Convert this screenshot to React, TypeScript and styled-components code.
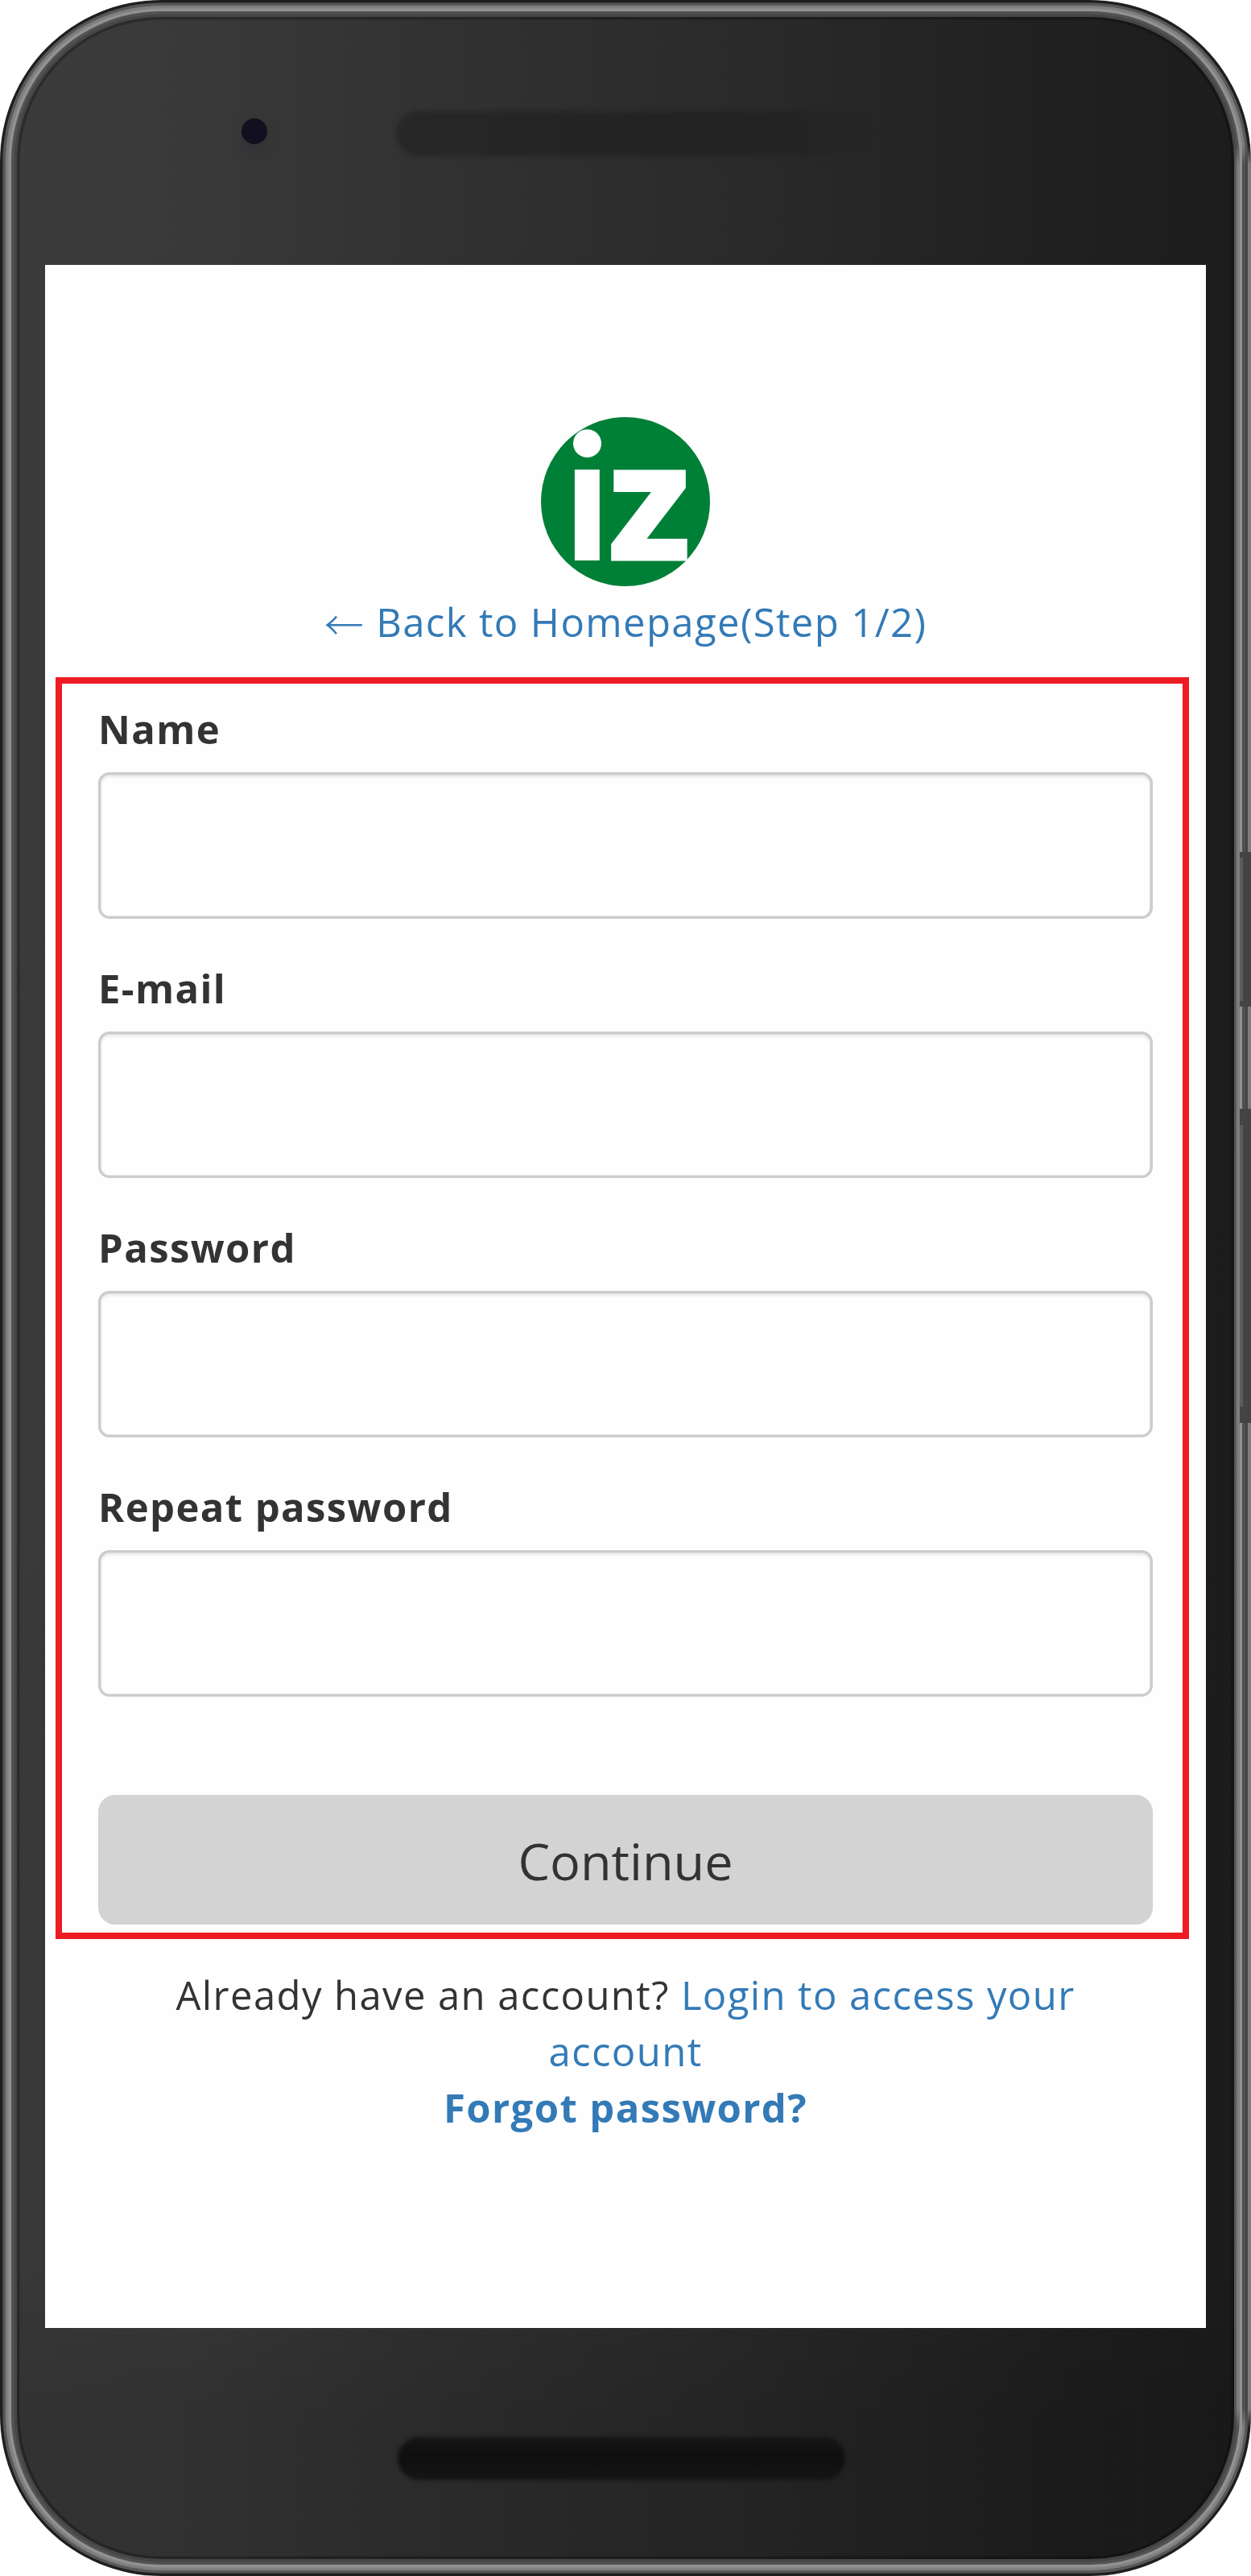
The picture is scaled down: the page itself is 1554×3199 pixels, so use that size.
import styled, { createGlobalStyle, css } from 'styled-components';

const GlobalStyle = createGlobalStyle`
    * {
        box-sizing: border-box;
    }

    body {
        margin: 0;
        background: #fff;
        color: #333;
        font-family: 'Open Sans', sans-serif;
        font-size: 49px;
        line-height: 70px;
        letter-spacing: 1.4px;
    }
`;

const Phone = styled.div`
    position: relative;
    display: flex;
    flex-direction: column;
    width: 1554px;
    height: 3199px;
    padding: 0 56px;
    border-radius: 200px;
    background:
        linear-gradient(
            to bottom,
            rgb(0 0 0 / 0) 0,
            rgb(0 0 0 / 0) 300px,
            rgb(0 0 0 / 4%) 2800px,
            rgb(0 0 0 / 15%) 3000px
        ),
        linear-gradient(
            to right,
            #3b3b3b 0%,
            #393939 16%,
            #323232 34%,
            #2a2a2a 60%,
            #202020 85%,
            #1c1c1c 100%
        );
    box-shadow:
        inset 0 0 0 3.5px #1f1f1f,
        inset 0 0 0 7px #585858,
        inset 0 0 0 10.5px #7f7f7f,
        inset 0 0 0 14px #929292,
        inset 0 0 0 17.5px #525252,
        inset 0 0 0 21px #464646,
        inset 0 0 0 24.5px rgb(0 0 0 / 25%);
`;

// The right rim catches light on its outermost line, unlike the other sides.
const RightRim = styled.div`
    position: absolute;
    top: 180px;
    right: 0;
    bottom: 184px;
    width: 21px;
    background: linear-gradient(
        to right,
        #585858 0 3.5px,
        #7d7d7d 3.5px 7px,
        #929292 7px 10.5px,
        #505050 10.5px 14px,
        #454545 14px 17.5px,
        #7c7c7c 17.5px 21px
    );
    mask-image: linear-gradient(
        transparent,
        #000 24px,
        #000 calc(100% - 24px),
        transparent
    );
`;

const SideButton = styled.div<{ top: number; height: number; cap: number }>`
    position: absolute;
    top: ${({ top }) => top}px;
    right: 0;
    width: 14px;
    height: ${({ height }) => height}px;
    background: #444;

    &::before {
        content: '';
        position: absolute;
        top: ${({ cap }) => cap}px;
        bottom: ${({ cap }) => cap}px;
        left: 0;
        width: 4px;
        background: #5c5c5c;
    }
`;

const Bezel = styled.div<{ height: number }>`
    display: flex;
    align-items: flex-start;
    flex: none;
    height: ${({ height }) => height}px;
`;

const Camera = styled.div`
    width: 32px;
    height: 32px;
    margin: 147px 0 0 244px;
    border-radius: 50%;
    background: #130f20;
    box-shadow: 0 8px 14px rgb(48 46 56 / 60%);
`;

const Grille = styled.div<{ variant: 'speaker' | 'mic' }>`
    border-radius: 29px;

    ${({ variant }) =>
        variant === 'speaker'
            ? css`
                  width: 590px;
                  height: 56px;
                  margin: 138px 0 0 160px;
                  background: linear-gradient(
                      to right,
                      #272727,
                      #232323 60%,
                      #242424 85%,
                      rgb(36 36 36 / 0)
                  );
                  filter: blur(3px);
              `
            : css`
                  width: 556px;
                  height: 54px;
                  margin: 135px 0 0 438px;
                  background: linear-gradient(
                      #171717,
                      #0f0f0f 35%,
                      #101010 65%,
                      #151515
                  );
                  filter: blur(2.5px);
              `}
`;

const Screen = styled.main`
    display: flex;
    flex-direction: column;
    flex: none;
    height: 2562px;
    padding-top: 189px;
    background: #fefefe;
`;

const Logo = styled.svg`
    display: block;
    flex: none;
    width: 210px;
    height: 210px;
    margin: 0 auto 9px;
    overflow: visible;
`;

const LogoText = styled.text<{ size: number; outline?: number }>`
    fill: #fff;
    stroke: #fff;
    stroke-width: ${({ outline = 0 }) => outline}px;
    font-family: 'Open Sans', sans-serif;
    font-size: ${({ size }) => size}px;
    font-weight: 700;
    letter-spacing: 0;
`;

const Link = styled.a<{ strong?: boolean }>`
    color: #337ab7;
    font-weight: ${({ strong }) => (strong ? 700 : 400)};
    text-decoration: none;
`;

const Arrow = styled.span`
    font-family: 'Noto Sans CJK JP', sans-serif;
    font-weight: 300;
    line-height: 1;
    vertical-align: -4px;
`;

const Centered = styled.div`
    text-align: center;
`;

const Form = styled.form`
    display: flex;
    flex-direction: column;
    margin: 34px 21px 34px 13px;
    padding: 21px 37px 10px 45px;
    border: 8px solid #ed1c24;
`;

const Field = styled.div`
    display: flex;
    flex-direction: column;
    gap: 19px;
    margin-bottom: 51px;
`;

const Label = styled.label`
    font-weight: 700;
`;

const Input = styled.input`
    width: 100%;
    height: 182px;
    padding: 21px 42px;
    border: 3px solid #ccc;
    border-radius: 14px;
    outline: none;
    background: #fefefe;
    box-shadow:
        inset 0 0 0 0.5px #ccc,
        inset 0 3.5px 3.5px rgb(0 0 0 / 7.5%);
    font: inherit;
`;

const SubmitButton = styled.button`
    height: 161px;
    margin-top: 71px;
    padding: 2px 0 0;
    border: none;
    border-radius: 21px;
    background: #d3d3d3;
    color: #333;
    font-family: inherit;
    font-size: 63px;
    line-height: 84px;
`;

const FIELDS = [
    { id: 'name', label: 'Name', type: 'text' },
    { id: 'email', label: 'E-mail', type: 'email' },
    { id: 'password', label: 'Password', type: 'password' },
    { id: 'repeat-password', label: 'Repeat password', type: 'password' },
];

const App = () => (
    <>
        <GlobalStyle />
        <Phone>
            <RightRim />
            <SideButton top={1058} height={192} cap={7} />
            <SideButton top={1377} height={390} cap={20} />
            <Bezel height={329}>
                <Camera />
                <Grille variant='speaker' />
            </Bezel>
            <Screen>
                <Logo viewBox='0 0 210 210' aria-label='iz'>
                    {/* the font's own dot is too flat, so it is clipped and redrawn */}
                    <clipPath id='logo-stem'>
                        <rect y='58' width='210' height='152' />
                    </clipPath>
                    <circle cx='105' cy='105' r='105' fill='#008037' />
                    <g clipPath='url(#logo-stem)'>
                        <LogoText size={207} x='25.7' y='178'>
                            i
                        </LogoText>
                    </g>
                    <circle cx='57.5' cy='32.7' r='17.5' fill='#fff' />
                    <LogoText
                        size={198}
                        outline={5}
                        transform='translate(84.2 175.5) scale(1.045 1)'
                    >
                        z
                    </LogoText>
                </Logo>
                <Centered>
                    <Link>
                        <Arrow>←</Arrow> Back to Homepage(Step 1/2)
                    </Link>
                </Centered>
                <Form>
                    {FIELDS.map(({ id, label, type }) => (
                        <Field key={id}>
                            <Label htmlFor={id}>{label}</Label>
                            <Input id={id} type={type} />
                        </Field>
                    ))}
                    <SubmitButton type='button'>Continue</SubmitButton>
                </Form>
                <Centered>
                    Already have an account?{' '}
                    <Link>
                        Login to access your
                        <br />
                        account
                    </Link>
                    <br />
                    <Link strong>Forgot password?</Link>
                </Centered>
            </Screen>
            <Bezel height={308}>
                <Grille variant='mic' />
            </Bezel>
        </Phone>
    </>
);

export default App;
